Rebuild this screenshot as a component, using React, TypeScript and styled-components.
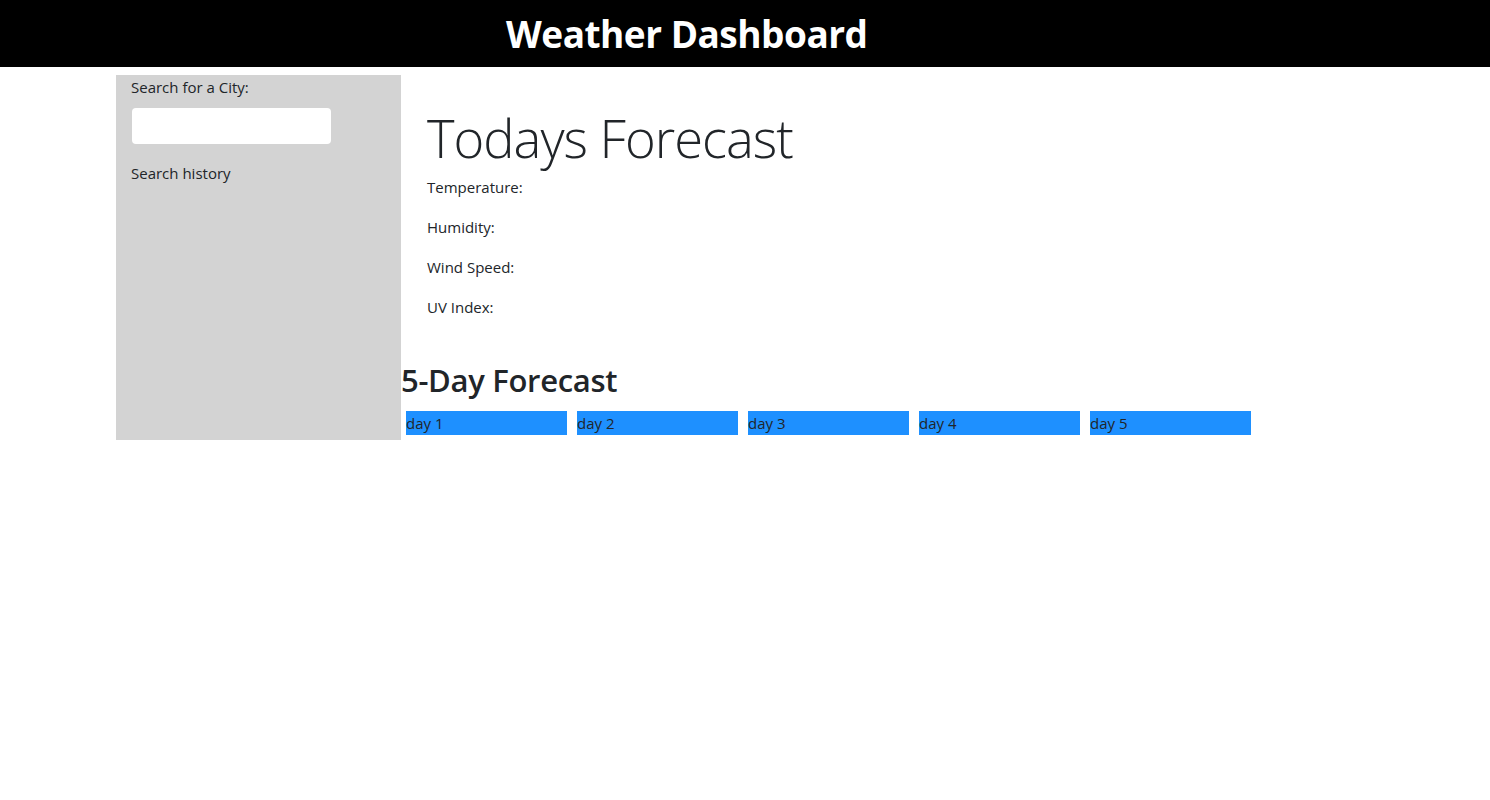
import React from "react";
import styled, { createGlobalStyle } from "styled-components";

const GlobalStyle = createGlobalStyle`
  body {
    margin: 0;
    font-family: "Open Sans", "Noto Sans", sans-serif;
    font-size: 16px;
    line-height: 1.5;
    color: #212529;
    background: #fff;
  }
  * { box-sizing: border-box; }
`;

const Header = styled.header`
  height: 67px;
  background: #000;
  display: flex;
  align-items: center;
  padding-left: 506px;
`;

const Title = styled.h1`
  margin: 0 0 -2px;
  color: #fff;
  font-size: 37px;
  font-weight: 700;
  line-height: 1.2;
  letter-spacing: -0.5px;
`;

const Row = styled.div`
  display: flex;
  margin: 8px 0 0 116px;
`;

const Sidebar = styled.aside`
  width: 285px;
  background: #d3d3d3;
  padding: 0 15px;
`;

const Label = styled.div`
  font-size: 15px;
  line-height: 24px;
`;

const CityInput = styled.input`
  display: block;
  width: 199px;
  height: 36px;
  margin: 9px 0 0 1px;
  border: none;
  border-radius: 4px;
  background: #fff;
`;

const History = styled.div`
  font-size: 15px;
  line-height: 24px;
  margin-top: 17px;
`;

const Main = styled.main`
  display: flex;
  flex-direction: column;
`;

const Today = styled.section`
  padding: 29px 26px 26px;
`;

const TodayTitle = styled.h2`
  margin: 0 0 4px;
  font-size: 52.5px;
  font-weight: 300;
  line-height: 67px;
  letter-spacing: -1px;
`;

const Stat = styled.p`
  margin: 0 0 16px;
  font-size: 15px;
  line-height: 24px;
`;

const FiveTitle = styled.h3`
  margin: 0 0 12px;
  font-size: 31px;
  font-weight: 600;
  line-height: 38px;
  letter-spacing: -0.3px;
`;

const Days = styled.div`
  display: flex;
  gap: 10px;
  padding: 0 5px 5px;
`;

const Day = styled.div`
  width: 161px;
  height: 24px;
  background: #1e90ff;
  font-size: 15px;
  line-height: 24px;
`;

export default function App() {
  return (
    <>
      <GlobalStyle />
      <Header>
        <Title>Weather Dashboard</Title>
      </Header>
      <Row>
        <Sidebar>
          <Label>Search for a City:</Label>
          <CityInput type="text" />
          <History>Search history</History>
        </Sidebar>
        <Main>
          <Today>
            <TodayTitle>Todays Forecast</TodayTitle>
            <Stat>Temperature:</Stat>
            <Stat>Humidity:</Stat>
            <Stat>Wind Speed:</Stat>
            <Stat>UV Index:</Stat>
          </Today>
          <FiveTitle>5-Day Forecast</FiveTitle>
          <Days>
            {[1, 2, 3, 4, 5].map((n) => (
              <Day key={n}>day {n}</Day>
            ))}
          </Days>
        </Main>
      </Row>
    </>
  );
}
